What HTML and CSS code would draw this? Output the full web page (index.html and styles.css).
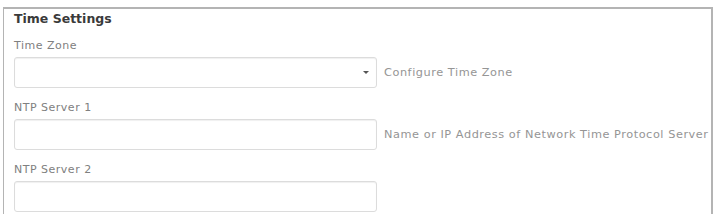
FILE: index.html
```html
<!DOCTYPE html>
<html lang="en">
<head>
    <meta charset="UTF-8">
    <meta name="viewport" content="width=device-width, initial-scale=1.0">
    <title>Time Settings</title>
    <link rel="stylesheet" href="styles.css">
</head>
<body>
    <div id="container">
        <h2 class="title">Time Settings</h2>

        <div class="field">
            <label class="field_label" for="tz">Time Zone</label>
            <div class="field_row">
                <div class="select_box">
                    <select id="tz"></select>
                    <span class="caret"></span>
                </div>
                <span class="help">Configure Time Zone</span>
            </div>
        </div>

        <div class="field">
            <label class="field_label" for="ntp1">NTP Server 1</label>
            <div class="field_row">
                <input type="text" id="ntp1">
                <span class="help">Name or IP Address of Network Time Protocol Server</span>
            </div>
        </div>

        <div class="field">
            <label class="field_label" for="ntp2">NTP Server 2</label>
            <div class="field_row">
                <input type="text" id="ntp2">
            </div>
        </div>
    </div>
</body>
</html>
```

FILE: styles.css
```css
* {
    margin: 0;
    padding: 0;
    box-sizing: border-box;
}

body {
    background-color: #fff;
    font-family: "DejaVu Sans", "Open Sans", sans-serif;
    color: #333;
    overflow: hidden;
}

#container {
    margin: 7px 5px 0 3px;
    padding: 2px 10px 0 10px;
    border: 1px solid #b4b4b4;
    border-bottom: none;
    border-right-width: 2px;
    border-top-width: 2px;
    height: 207px;
}

.title {
    font-size: 12.5px;
    font-weight: bold;
    line-height: 16px;
    color: #3a3a3a;
}

.field {
    margin-top: 13px;
}

.field:first-of-type {
    margin-top: 12px;
}

.field_label {
    display: block;
    font-size: 11px;
    line-height: 14px;
    letter-spacing: 0.5px;
    color: #808080;
    margin-bottom: 4px;
}

.field_row {
    display: flex;
    align-items: center;
}

.select_box {
    position: relative;
    flex-shrink: 0;
    width: 363px;
    height: 31px;
}

.select_box select,
.field_row input {
    flex-shrink: 0;
    width: 363px;
    height: 31px;
    border: 1px solid #dcdcdc;
    border-radius: 3px;
    background-color: #fff;
    box-shadow: inset 0 1px 1px #f0f0f0;
    appearance: none;
    outline: none;
}

.caret {
    position: absolute;
    right: 8px;
    top: 14px;
    width: 0;
    height: 0;
    border-left: 3px solid transparent;
    border-right: 3px solid transparent;
    border-top: 3px solid #555;
}

.help {
    margin-left: 7px;
    font-size: 11.3px;
    letter-spacing: 0.55px;
    color: #959595;
    white-space: nowrap;
}
```
